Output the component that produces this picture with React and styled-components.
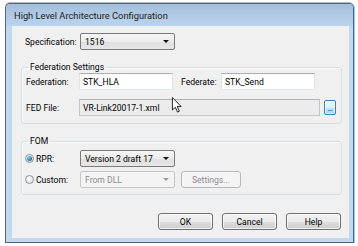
import React from 'react';
import styled, { createGlobalStyle, css } from 'styled-components';

const Global = createGlobalStyle`
  html, body { margin: 0; padding: 0; background: #ffffff; }
  body { font-family: Roboto, "Liberation Sans", sans-serif; font-size: 8.6px; color: #000; }
`;

const Window = styled.div`
  margin: 3px 0 0 5px;
  width: 349px;
  height: 240px;
  box-sizing: border-box;
  border: 1px solid #56677a;
  border-right-color: #3e6f93;
  border-radius: 5px 5px 0 0;
  background: #c1d8ee;
  box-shadow: 0 -1px 0 #b9b9b9, 1px 0 0 #9cc7e4;
  display: flex;
  flex-direction: column;
`;

const TitleBar = styled.div`
  height: 22px;
  flex: none;
  display: flex;
  align-items: center;
  padding-left: 8px;
  border-radius: 4px 4px 0 0;
  background: linear-gradient(#a3bedb, #b4cce6 60%, #bad2ea);
  font-size: 9.3px;
  color: #1b1b1b;
  padding-top: 1px;
  box-sizing: border-box;
`;

const Client = styled.div`
  margin: 0 4px 4px 6px;
  flex: 1;
  background: #f0f0f0;
  display: flex;
  flex-direction: column;
  padding: 7px 7px 8px 9px;
  box-sizing: border-box;
`;

const SpecRow = styled.div`
  display: flex;
  align-items: center;
  height: 17px;
  padding-left: 4px;
`;

const Label = styled.span`
  width: ${p => p.$w}px;
  flex: none;
  white-space: nowrap;
  color: ${p => (p.$disabled ? '#8a8a8a' : '#000')};
`;

const Arrow = styled.span`
  width: 0;
  height: 0;
  border-left: 3px solid transparent;
  border-right: 3px solid transparent;
  border-top: 3px solid ${p => (p.$disabled ? '#9a9a9a' : '#111')};
  margin-right: 5px;
`;

const Combo = styled.div`
  width: ${p => p.$w || 95}px;
  height: 17px;
  box-sizing: border-box;
  flex: none;
  display: flex;
  align-items: center;
  justify-content: space-between;
  padding-left: 4px;
  border-radius: 2px;
  ${p =>
    p.$disabled
      ? css`
          border: 1px solid #c4c7ca;
          background: #f4f4f4;
          color: #8d8d8d;
        `
      : css`
          border: 1px solid #7a7a7a;
          background: linear-gradient(#f7f7f7, #ececec 50%, #e0e0e0 52%, #e6e6e6);
          color: #000;
        `}
`;

const Group = styled.fieldset`
  margin: ${p => p.$mt}px 0 0 0;
  padding: 0 4px ${p => p.$pb}px 4px;
  border: 1px solid #d5dfe5;
  border-radius: 3px;
  box-shadow: inset 1px 1px 0 #fbfbfb;
  min-width: 0;
  display: flex;
  flex-direction: column;
  gap: ${p => p.$gap}px;
`;

const Legend = styled.legend`
  padding: 0 2px;
  margin-left: 2px;
  line-height: 12px;
  height: 12px;
  color: #000;
`;

const Row = styled.div`
  display: flex;
  align-items: center;
  height: 17px;
  margin-top: ${p => p.$mt || 0}px;
`;

const TextBox = styled.div`
  width: ${p => p.$w}px;
  height: 17px;
  flex: none;
  box-sizing: border-box;
  display: flex;
  align-items: center;
  padding-left: 3px;
  position: relative;
  border: 1px solid #e2e3ea;
  border-top-color: #abadb3;
  border-bottom-color: #e3e9ef;
  background: ${p => (p.$readonly ? '#ececec' : '#ffffff')};
  ${p =>
    p.$readonly &&
    css`
      border-color: #bcc6d0;
      border-top-color: #aab4bf;
    `}
`;

const Spacer = styled.span`
  width: ${p => p.$w}px;
  flex: none;
`;

const BrowseButton = styled.div`
  width: 12px;
  height: 15px;
  margin-left: 4px;
  box-sizing: border-box;
  border: 1px solid #3c7fb1;
  border-radius: 2px;
  background: linear-gradient(#eaf6fd, #d9f0fc 50%, #bee6fd 52%, #a7d9f5);
  box-shadow: inset 0 0 0 1px rgba(255, 255, 255, 0.6);
  display: flex;
  align-items: flex-end;
  justify-content: center;
  font-size: 8px;
  line-height: 10px;
  color: #000;
  letter-spacing: -0.5px;
`;

const Cursor = styled.svg`
  position: absolute;
  left: 92px;
  top: -3px;
  width: 10px;
  height: 16px;
  overflow: visible;
`;

const RadioWrap = styled.label`
  width: 55px;
  margin-left: -1px;
  flex: none;
  display: flex;
  align-items: center;
  gap: 2px;
`;

const RadioDot = styled.span`
  width: 9px;
  height: 9px;
  box-sizing: border-box;
  border-radius: 50%;
  border: 1px solid #8e9298;
  background: radial-gradient(circle at 40% 35%, #ffffff, #e4e4e4 70%, #d0d0d0);
  display: flex;
  align-items: center;
  justify-content: center;
  &::after {
    content: '';
    display: ${p => (p.$checked ? 'block' : 'none')};
    width: 5px;
    height: 5px;
    border-radius: 50%;
    background: radial-gradient(circle at 40% 35%, #8fd1f5, #2a7ab5 60%, #124a74);
  }
`;

const Button = styled.div`
  width: ${p => p.$w}px;
  height: 17px;
  box-sizing: border-box;
  flex: none;
  display: flex;
  align-items: center;
  justify-content: center;
  border-radius: 3px;
  margin-left: ${p => p.$ml || 0}px;
  ${p =>
    p.$disabled
      ? css`
          border: 1px solid #b5b9bd;
          background: #f4f4f4;
          color: #8d8d8d;
        `
      : css`
          border: 1px solid #707070;
          background: linear-gradient(#f2f2f2, #ebebeb 50%, #dddddd 52%, #cfcfcf);
          box-shadow: inset 0 0 0 1px rgba(255, 255, 255, 0.7);
          color: #000;
        `}
`;

const ButtonRow = styled.div`
  display: flex;
  justify-content: flex-end;
  gap: 9px;
  margin-top: 18px;
  margin-right: 1px;
`;

export default function App() {
  return (
    <>
      <Global />
      <Window>
        <TitleBar>High Level Architecture Configuration</TitleBar>
        <Client>
          <SpecRow>
            <Label $w={55}>Specification:</Label>
            <Combo>
              <span>1516</span>
              <Arrow />
            </Combo>
          </SpecRow>

          <Group $mt={11} $pb={7} $gap={9}>
            <Legend>Federation Settings</Legend>
            <Row>
              <Label $w={53}>Federation:</Label>
              <TextBox $w={94}>STK_HLA</TextBox>
              <Spacer $w={8} />
              <Label $w={40}>Federate:</Label>
              <TextBox $w={94}>STK_Send</TextBox>
            </Row>
            <Row>
              <Label $w={53}>FED File:</Label>
              <TextBox $w={241} $readonly>
                VR-Link20017-1.xml
                <Cursor viewBox="0 0 12 19">
                  <path
                    d="M0.5 0.5 L0.5 15.5 L4 12.2 L6.6 18 L8.8 17 L6.3 11.4 L11 11.4 Z"
                    fill="#ffffff"
                    stroke="#000000"
                    strokeWidth="1"
                    strokeLinejoin="round"
                  />
                </Cursor>
              </TextBox>
              <BrowseButton>...</BrowseButton>
            </Row>
          </Group>

          <Group $mt={11} $pb={6} $gap={4}>
            <Legend>FOM</Legend>
            <Row $mt={3}>
              <RadioWrap>
                <RadioDot $checked />
                <span>RPR:</span>
              </RadioWrap>
              <Combo>
                <span>Version 2 draft 17</span>
                <Arrow />
              </Combo>
            </Row>
            <Row>
              <RadioWrap>
                <RadioDot />
                <span>Custom:</span>
              </RadioWrap>
              <Combo $disabled>
                <span>From DLL</span>
                <Arrow $disabled />
              </Combo>
              <Button $w={60} $ml={6} $disabled>
                Settings...
              </Button>
            </Row>
          </Group>

          <ButtonRow>
            <Button $w={55}>OK</Button>
            <Button $w={55}>Cancel</Button>
            <Button $w={55}>Help</Button>
          </ButtonRow>
        </Client>
      </Window>
    </>
  );
}
